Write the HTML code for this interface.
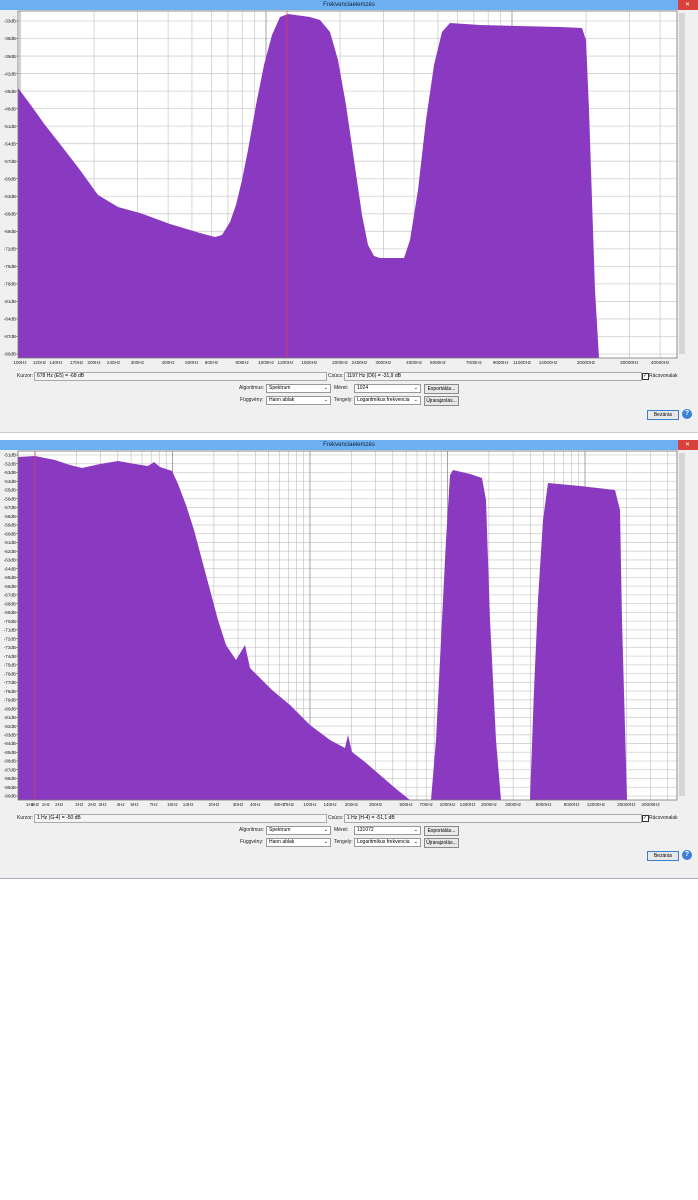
<!DOCTYPE html><html><head><meta charset="utf-8"><style>
body{margin:0;width:698px;height:1200px;background:#fff;font-family:"Liberation Sans",sans-serif;position:relative;overflow:hidden}
.a{position:absolute}
.win{position:absolute;left:0;width:698px;background:#f0f0f0}
.title{position:absolute;left:0;top:0;width:698px;height:10px;background:#6cb0f2;font-size:6px;color:#123;text-align:center;line-height:10px}
.t{position:absolute;font-size:5px;color:#222;white-space:nowrap}
.box{position:absolute;height:7px;border:1px solid #aaa;background:#f4f4f4;font-size:5px;line-height:7px;padding-left:2px;box-sizing:content-box}
.sel{position:absolute;height:7px;border:1px solid #999;background:#fff;font-size:5px;line-height:7px;padding-left:2px}
.btn{position:absolute;height:8px;border:1px solid #8a8a8a;background:#e8e8e8;font-size:5px;line-height:8px;text-align:center}
</style></head><body>
<div class="win" style="top:0;height:432px"></div>
<div class="win" style="top:440px;height:438px"></div>
<div class="a" style="top:432px;left:0;width:698px;height:8px;background:#fff;border-top:1px solid #ccc"></div>
<div class="a" style="top:878px;left:0;width:698px;height:1px;background:#aab"></div>
<div class="title">Frekvenciaelemzés</div>
<div class="title" style="top:440px">Frekvenciaelemzés</div>
<div class="a" style="left:678px;top:0;width:20px;height:10px;background:#d9413a"></div>
<div class="a" style="left:678px;top:440px;width:20px;height:10px;background:#d9413a"></div>
<div class="t" style="left:685px;top:1px;color:#fff;font-size:6px">✕</div>
<div class="t" style="left:685px;top:441px;color:#fff;font-size:6px">✕</div>
<svg id="s" class="a" style="left:0;top:0" width="698" height="880"></svg>
<div class="t" style="left:17px;top:373px">Kurzor:</div><div class="box" style="left:34px;top:372px;width:289px">678 Hz (E5) = -68 dB</div>
<div class="t" style="left:328px;top:373px">Csúcs:</div><div class="box" style="left:344px;top:372px;width:294px">1197 Hz (D6) = -31,9 dB</div>
<div class="a" style="left:642px;top:373px;width:5px;height:5px;border:1px solid #333;background:#fff;font-size:5px;line-height:5px">✓</div><div class="t" style="left:649px;top:373px">Rácsvonalak</div>
<div class="t" style="left:239px;top:385px">Algoritmus:</div><div class="sel" style="left:266px;top:384px;width:61px">Spektrum<span style="float:right;margin-right:2px">⌄</span></div>
<div class="t" style="left:334px;top:385px">Méret:</div><div class="sel" style="left:354px;top:384px;width:63px">1024<span style="float:right;margin-right:2px">⌄</span></div>
<div class="btn" style="left:424px;top:384px;width:33px">Exportálás...</div>
<div class="t" style="left:240px;top:397px">Függvény:</div><div class="sel" style="left:266px;top:396px;width:61px">Hann ablak<span style="float:right;margin-right:2px">⌄</span></div>
<div class="t" style="left:334px;top:397px">Tengely:</div><div class="sel" style="left:354px;top:396px;width:63px">Logaritmikus frekvencia<span style="float:right;margin-right:2px">⌄</span></div>
<div class="btn" style="left:424px;top:396px;width:33px">Újrarajzolás...</div>
<div class="btn" style="left:647px;top:410px;width:30px;border-color:#3c7fd0">Bezárás</div>
<div class="a" style="left:682px;top:409px;width:10px;height:10px;border-radius:50%;background:#3a7fd8;color:#fff;font-size:7px;text-align:center;line-height:10px;font-weight:bold">?</div>
<div class="t" style="left:17px;top:815px">Kurzor:</div><div class="box" style="left:34px;top:814px;width:289px">1 Hz (G-4) = -50 dB</div>
<div class="t" style="left:328px;top:815px">Csúcs:</div><div class="box" style="left:344px;top:814px;width:294px">1 Hz (H-4) = -51,1 dB</div>
<div class="a" style="left:642px;top:815px;width:5px;height:5px;border:1px solid #333;background:#fff;font-size:5px;line-height:5px">✓</div><div class="t" style="left:649px;top:815px">Rácsvonalak</div>
<div class="t" style="left:239px;top:827px">Algoritmus:</div><div class="sel" style="left:266px;top:826px;width:61px">Spektrum<span style="float:right;margin-right:2px">⌄</span></div>
<div class="t" style="left:334px;top:827px">Méret:</div><div class="sel" style="left:354px;top:826px;width:63px">131072<span style="float:right;margin-right:2px">⌄</span></div>
<div class="btn" style="left:424px;top:826px;width:33px">Exportálás...</div>
<div class="t" style="left:240px;top:839px">Függvény:</div><div class="sel" style="left:266px;top:838px;width:61px">Hann ablak<span style="float:right;margin-right:2px">⌄</span></div>
<div class="t" style="left:334px;top:839px">Tengely:</div><div class="sel" style="left:354px;top:838px;width:63px">Logaritmikus frekvencia<span style="float:right;margin-right:2px">⌄</span></div>
<div class="btn" style="left:424px;top:838px;width:33px">Újrarajzolás...</div>
<div class="btn" style="left:647px;top:851px;width:30px;border-color:#3c7fd0">Bezárás</div>
<div class="a" style="left:682px;top:850px;width:10px;height:10px;border-radius:50%;background:#3a7fd8;color:#fff;font-size:7px;text-align:center;line-height:10px;font-weight:bold">?</div>
<script>
var s=document.getElementById('s'),h='';
function R(x,y,w,hh,f){h+='<rect x="'+x+'" y="'+y+'" width="'+w+'" height="'+hh+'" fill="'+f+'"/>';}
function L(x1,y1,x2,y2,c,w){h+='<line x1="'+x1+'" y1="'+y1+'" x2="'+x2+'" y2="'+y2+'" stroke="'+c+'" stroke-width="'+(w||0.6)+'"/>';}
function T(x,y,t,a){h+='<text x="'+x+'" y="'+y+'" font-size="4.6" fill="#222" font-family="Liberation Sans" text-anchor="'+(a||'start')+'">'+t+'</text>';}
function plot(top,bot,db0,db1,dstep,y0,yb,f0x,ppd,minF,maxF,labels,path,redx){
 R(18,top,659,bot-top,'#fff');
 var n=(db1-db0)/dstep,step=(yb-y0)/n;
 for(var i=0;i<=n;i++){var y=y0+i*step;L(18,y,677,y,'#d0d0d0',0.8);T(16,y+1.7,'-'+(db0+i*dstep)+'dB','end');L(16,y,18,y,'#444',0.5);}
 for(var d=minF;d<=maxF;d*=10){for(var k=1;k<10;k++){var f=d*k;var x=f0x+ppd*Math.log10(f);if(x>18&&x<677)L(x,top,x,bot,k==1?'#9a9a9a':'#bdbdbd',k==1?0.9:0.6);}}
 h+='<path d="'+path+'" fill="#8a3ac0"/>';
 L(redx,top,redx,bot,'#e04050',0.7);
 h+='<rect x="18" y="'+top+'" width="659" height="'+(bot-top)+'" fill="none" stroke="#777" stroke-width="0.8"/>';
 R(679,top+2,6,bot-top-6,'#d6d6d6');
 labels.forEach(function(l){var x=f0x+ppd*Math.log10(l[0]);T(x,bot+6,l[1],'middle');});
}
plot(11,358,33,90,3,21,354,20-246*2,246,10,100000,[[100,'100Hz'],[120,'120Hz'],[140,'140Hz'],[170,'170Hz'],[200,'200Hz'],[240,'240Hz'],[300,'300Hz'],[400,'400Hz'],[500,'500Hz'],[600,'600Hz'],[800,'800Hz'],[1000,'1000Hz'],[1200,'1200Hz'],[1500,'1500Hz'],[2000,'2000Hz'],[2400,'2400Hz'],[3000,'3000Hz'],[4000,'4000Hz'],[5000,'5000Hz'],[7000,'7000Hz'],[9000,'9000Hz'],[11000,'11000Hz'],[14000,'14000Hz'],[20000,'20000Hz'],[30000,'30000Hz'],[40000,'40000Hz']],
'M18,358 L18,88 L30,104 L45,125 L60,144 L80,170 L98,195 L118,207 L140,213 L170,224 L200,233 L215,237 L222,235 L230,222 L236,205 L242,180 L248,150 L256,105 L264,65 L272,35 L280,17 L288,14 L310,17 L320,20 L330,32 L338,60 L346,105 L354,160 L362,215 L368,245 L374,256 L380,258 L404,258 L410,240 L418,190 L426,120 L434,65 L442,32 L450,23 L480,25 L560,27 L582,28 L586,40 L589,110 L592,200 L595,290 L599,358 Z',287);
plot(451,800,51,90,1,455,796,35,137.5,1,100000,[[0.92,'1Hz'],[1,'1Hz'],[1.2,'1Hz'],[1.5,'2Hz'],[2.1,'2Hz'],[2.6,'2Hz'],[3.1,'3Hz'],[4.2,'4Hz'],[5.3,'5Hz'],[7.3,'7Hz'],[10,'10Hz'],[13,'13Hz'],[20,'20Hz'],[30,'30Hz'],[40,'40Hz'],[60,'60Hz'],[70,'76Hz'],[100,'100Hz'],[140,'140Hz'],[200,'200Hz'],[300,'300Hz'],[500,'500Hz'],[700,'700Hz'],[1000,'1000Hz'],[1400,'1400Hz'],[2000,'2000Hz'],[3000,'3000Hz'],[5000,'5000Hz'],[8000,'8000Hz'],[12000,'12000Hz'],[20000,'20000Hz'],[30000,'30000Hz']],
'M18,800 L18,457 L35,456 L55,460 L70,465 L82,468 L100,464 L118,461 L135,464 L148,466 L154,462 L160,467 L172,471 L178,484 L186,505 L194,530 L202,560 L210,590 L218,620 L226,645 L236,660 L245,645 L250,668 L262,680 L272,690 L290,705 L310,725 L330,740 L345,748 L348,735 L352,752 L365,762 L380,775 L395,788 L410,800 Z M431,800 L436,740 L441,640 L446,540 L450,475 L453,470 L470,474 L482,478 L486,500 L490,620 L496,740 L501,800 Z M530,800 L534,690 L538,600 L543,520 L548,483 L580,486 L615,490 L620,510 L622,620 L627,800 Z',35);
s.innerHTML=h;
</script>
</body></html>
